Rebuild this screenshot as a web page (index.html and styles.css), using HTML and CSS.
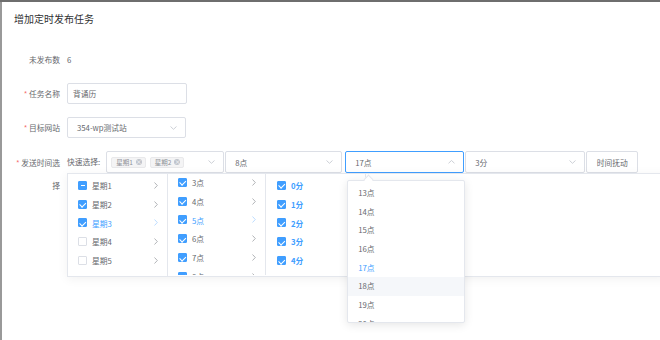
FILE: index.html
```html
<!DOCTYPE html>
<html>
<head>
  <meta charset="UTF-8">
  <title>增加定时发布任务</title>
  <link rel="stylesheet" href="styles.css">
</head>
<body>
  <div class="dialog">
    <div class="dialog-title">增加定时发布任务</div>

    <div class="form">
      <div class="form-row">
        <label class="form-label">未发布数</label>
        <div class="form-content">6</div>
      </div>

      <div class="form-row">
        <label class="form-label"><span class="star">*</span> 任务名称</label>
        <div class="form-content">
          <div class="input">背诵历</div>
        </div>
      </div>

      <div class="form-row">
        <label class="form-label"><span class="star">*</span> 目标网站</label>
        <div class="form-content">
          <div class="select site-select">
            <span>354-wp测试站</span>
            <svg class="arrow" width="7" height="4" viewBox="0 0 7 4"><path d="M0.5 0.5 L3.5 3.3 L6.5 0.5" fill="none" stroke="#c0c4cc" stroke-width="0.8"/></svg>
          </div>
        </div>
      </div>

      <div class="form-row time-row">
        <label class="form-label time-label"><span class="star">*</span> 发送时间选择</label>
        <div class="form-content time-content">
          <span class="quick-label">快速选择:</span>

          <div class="select quick-select">
            <span class="tag">星期1 <i class="tag-close">×</i></span>
            <span class="tag">星期2 <i class="tag-close">×</i></span>
            <svg class="arrow" width="7" height="4" viewBox="0 0 7 4"><path d="M0.5 0.5 L3.5 3.3 L6.5 0.5" fill="none" stroke="#c0c4cc" stroke-width="0.8"/></svg>
          </div>

          <div class="select hour-select">
            <span>8点</span>
            <svg class="arrow" width="7" height="4" viewBox="0 0 7 4"><path d="M0.5 0.5 L3.5 3.3 L6.5 0.5" fill="none" stroke="#c0c4cc" stroke-width="0.8"/></svg>
          </div>

          <div class="select end-select is-focus">
            <span>17点</span>
            <svg class="arrow" width="7" height="4" viewBox="0 0 7 4"><path d="M0.5 3.3 L3.5 0.5 L6.5 3.3" fill="none" stroke="#c0c4cc" stroke-width="0.8"/></svg>

            <div class="dropdown">
              <span class="popper-arrow"></span>
              <div class="dropdown-list">
                <div class="dropdown-item">13点</div>
                <div class="dropdown-item">14点</div>
                <div class="dropdown-item">15点</div>
                <div class="dropdown-item">16点</div>
                <div class="dropdown-item selected">17点</div>
                <div class="dropdown-item hover">18点</div>
                <div class="dropdown-item">19点</div>
                <div class="dropdown-item">20点</div>
              </div>
            </div>
          </div>

          <div class="select minute-select">
            <span>3分</span>
            <svg class="arrow" width="7" height="4" viewBox="0 0 7 4"><path d="M0.5 0.5 L3.5 3.3 L6.5 0.5" fill="none" stroke="#c0c4cc" stroke-width="0.8"/></svg>
          </div>

          <button class="btn">时间抚动</button>

          <div class="cascader">
            <ul class="cascader-menu">
              <li class="cascader-node"><span class="checkbox half"></span><span class="node-label">星期1</span><svg class="chevron" width="4" height="7" viewBox="0 0 4 7"><path d="M0.5 0.5 L3.3 3.5 L0.5 6.5" fill="none" stroke="#909399" stroke-width="0.7"/></svg></li>
              <li class="cascader-node"><span class="checkbox checked"></span><span class="node-label">星期2</span><svg class="chevron" width="4" height="7" viewBox="0 0 4 7"><path d="M0.5 0.5 L3.3 3.5 L0.5 6.5" fill="none" stroke="#909399" stroke-width="0.7"/></svg></li>
              <li class="cascader-node active"><span class="checkbox checked"></span><span class="node-label">星期3</span><svg class="chevron" width="4" height="7" viewBox="0 0 4 7"><path d="M0.5 0.5 L3.3 3.5 L0.5 6.5" fill="none" stroke="#a0cfff" stroke-width="0.7"/></svg></li>
              <li class="cascader-node"><span class="checkbox"></span><span class="node-label">星期4</span><svg class="chevron" width="4" height="7" viewBox="0 0 4 7"><path d="M0.5 0.5 L3.3 3.5 L0.5 6.5" fill="none" stroke="#909399" stroke-width="0.7"/></svg></li>
              <li class="cascader-node"><span class="checkbox"></span><span class="node-label">星期5</span><svg class="chevron" width="4" height="7" viewBox="0 0 4 7"><path d="M0.5 0.5 L3.3 3.5 L0.5 6.5" fill="none" stroke="#909399" stroke-width="0.7"/></svg></li>
            </ul>
            <ul class="cascader-menu scrolled">
              <li class="cascader-node"><span class="checkbox checked"></span><span class="node-label">3点</span><svg class="chevron" width="4" height="7" viewBox="0 0 4 7"><path d="M0.5 0.5 L3.3 3.5 L0.5 6.5" fill="none" stroke="#909399" stroke-width="0.7"/></svg></li>
              <li class="cascader-node"><span class="checkbox checked"></span><span class="node-label">4点</span><svg class="chevron" width="4" height="7" viewBox="0 0 4 7"><path d="M0.5 0.5 L3.3 3.5 L0.5 6.5" fill="none" stroke="#909399" stroke-width="0.7"/></svg></li>
              <li class="cascader-node active"><span class="checkbox checked"></span><span class="node-label">5点</span><svg class="chevron" width="4" height="7" viewBox="0 0 4 7"><path d="M0.5 0.5 L3.3 3.5 L0.5 6.5" fill="none" stroke="#a0cfff" stroke-width="0.7"/></svg></li>
              <li class="cascader-node"><span class="checkbox checked"></span><span class="node-label">6点</span><svg class="chevron" width="4" height="7" viewBox="0 0 4 7"><path d="M0.5 0.5 L3.3 3.5 L0.5 6.5" fill="none" stroke="#909399" stroke-width="0.7"/></svg></li>
              <li class="cascader-node"><span class="checkbox checked"></span><span class="node-label">7点</span><svg class="chevron" width="4" height="7" viewBox="0 0 4 7"><path d="M0.5 0.5 L3.3 3.5 L0.5 6.5" fill="none" stroke="#909399" stroke-width="0.7"/></svg></li>
              <li class="cascader-node"><span class="checkbox checked"></span><span class="node-label">8点</span><svg class="chevron" width="4" height="7" viewBox="0 0 4 7"><path d="M0.5 0.5 L3.3 3.5 L0.5 6.5" fill="none" stroke="#909399" stroke-width="0.7"/></svg></li>
            </ul>
            <ul class="cascader-menu leaf">
              <li class="cascader-node"><span class="checkbox checked"></span><span class="node-label">0分</span></li>
              <li class="cascader-node"><span class="checkbox checked"></span><span class="node-label">1分</span></li>
              <li class="cascader-node"><span class="checkbox checked"></span><span class="node-label">2分</span></li>
              <li class="cascader-node"><span class="checkbox checked"></span><span class="node-label">3分</span></li>
              <li class="cascader-node"><span class="checkbox checked"></span><span class="node-label">4分</span></li>
            </ul>
          </div>
        </div>
      </div>
    </div>
  </div>
</body>
</html>
```

FILE: styles.css
```css
* {
  box-sizing: border-box;
}

body {
  margin: 0;
  height: 340px;
  overflow: hidden;
  font-family: "Noto Sans CJK SC", "Noto Sans", sans-serif;
  font-size: 7.75px;
  color: #66686d;
  background: #fff;
  border-top: 2px solid #6e6e6e;
}

.dialog {
  height: 338px;
  border-left: 2px solid #999;
}

.dialog-title {
  padding: 11px 12px 0;
  font-size: 10px;
  line-height: 12px;
  color: #303133;
}

.form {
  padding-top: 24px;
}

.form-row {
  display: flex;
  margin-bottom: 13px;
}

.form-label {
  flex-shrink: 0;
  width: 65px;
  padding: 0 7px 0 11px;
  text-align: right;
  line-height: 21px;
}

.star {
  color: #f56c6c;
}

.form-content {
  position: relative;
  line-height: 21px;
}

.input,
.select {
  position: relative;
  height: 21px;
  border: 1px solid #dcdfe6;
  border-radius: 2px;
  background: #fff;
  line-height: 19px;
}

.input {
  width: 120px;
  padding: 0 5px;
}

.select {
  display: flex;
  align-items: center;
  padding: 0 9px;
}

.select .arrow {
  position: absolute;
  right: 8px;
  top: 8px;
}

.site-select {
  width: 119px;
}

/* time row */
.time-label {
  line-height: 23px;
}

.time-content {
  display: flex;
  align-items: flex-start;
}

.time-content .select {
  height: 22px;
}

.quick-label {
  line-height: 22px;
  margin-right: 6px;
}

.quick-select {
  width: 118px;
  padding: 0 4px;
  gap: 4px;
}

.hour-select {
  width: 117px;
  margin-left: 1px;
}

.end-select {
  width: 119px;
  margin-left: 3px;
}

.end-select.is-focus {
  border-color: #409eff;
}

.minute-select {
  width: 120px;
  margin-left: 1px;
}

.tag {
  display: inline-flex;
  align-items: center;
  gap: 3px;
  height: 11px;
  padding: 0 3px 0 4px;
  border: 1px solid #e9e9eb;
  border-radius: 2px;
  background: #f4f4f5;
  color: #909399;
  font-size: 6.5px;
  line-height: 9px;
}

.tag-close {
  display: inline-block;
  width: 6px;
  height: 6px;
  border-radius: 50%;
  background: #c0c4cc;
  color: #fff;
  font-style: normal;
  font-size: 6px;
  line-height: 6px;
  text-align: center;
}

.btn {
  width: 52px;
  height: 22px;
  margin-left: 1px;
  padding: 0;
  border: 1px solid #dcdfe6;
  border-radius: 2px;
  background: #fff;
  color: #66686d;
  font-family: inherit;
  font-size: 7.75px;
}

/* select dropdown */
.dropdown {
  position: absolute;
  left: 1px;
  top: 28px;
  z-index: 3;
  width: 118px;
}

.popper-arrow {
  position: absolute;
  left: 18px;
  top: -4px;
  width: 7px;
  height: 7px;
  background: #fff;
  border-top: 1px solid #e4e7ed;
  border-left: 1px solid #e4e7ed;
  transform: rotate(45deg);
}

.dropdown-list {
  height: 143px;
  overflow: hidden;
  padding-top: 3px;
  border: 1px solid #e4e7ed;
  border-radius: 2px;
  background: #fff;
  box-shadow: 0 2px 10px rgba(0, 0, 0, 0.1);
}

.dropdown-item {
  height: 18.7px;
  padding-left: 10px;
  line-height: 18.7px;
}

.dropdown-item.selected {
  color: #409eff;
}

.dropdown-item.hover {
  background: #f5f7fa;
}

/* cascader panel */
.cascader {
  position: absolute;
  left: 0;
  top: 22px;
  z-index: 2;
  display: flex;
  width: 600px;
  height: 104px;
  border: 1px solid #e4e7ed;
  background: #fff;
  box-shadow: 0 2px 10px rgba(0, 0, 0, 0.06);
}

.cascader-menu {
  width: 100px;
  height: 100%;
  margin: 0;
  padding: 2px 0 0;
  list-style: none;
  overflow: hidden;
  border-right: 1px solid #e4e7ed;
}

.cascader-menu.scrolled {
  width: 98px;
  padding-top: 0;
  margin-top: -1px;
}

.cascader-node {
  display: flex;
  align-items: center;
  height: 18.8px;
  padding: 0 9px 0 10px;
}

.leaf .cascader-node {
  padding-left: 11px;
  color: #409eff;
  font-weight: bold;
}

.cascader-node.active {
  color: #409eff;
}

.node-label {
  flex: 1;
}

.checkbox {
  position: relative;
  width: 9px;
  height: 9px;
  margin-right: 5px;
  border: 1px solid #dcdfe6;
  border-radius: 1px;
  background: #fff;
}

.checkbox.checked,
.checkbox.half {
  border-color: #409eff;
  background: #409eff;
}

.checkbox.checked::after {
  content: "";
  position: absolute;
  left: 2.3px;
  top: 0.5px;
  width: 2.5px;
  height: 4.5px;
  border: solid #fff;
  border-width: 0 1px 1px 0;
  transform: rotate(45deg);
}

.checkbox.half::after {
  content: "";
  position: absolute;
  left: 1.5px;
  right: 1.5px;
  top: 3px;
  height: 1px;
  background: #fff;
}
```
